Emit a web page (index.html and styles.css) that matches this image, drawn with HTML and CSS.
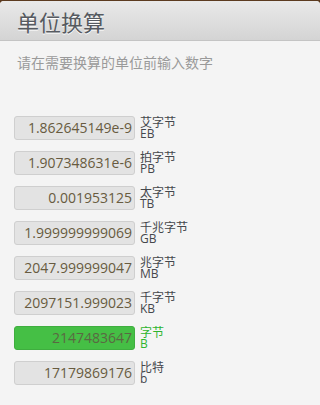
FILE: index.html
```html
<!DOCTYPE html>
<html>
<head>
<meta charset="utf-8">
<link rel="stylesheet" href="styles.css">
</head>
<body>
<div class="page">
  <header class="header"><h1 class="title">单位换算</h1></header>
  <p class="hint">请在需要换算的单位前输入数字</p>
  <div class="rows">
    <div class="row"><div class="field">1.862645149e-9</div><div class="unit"><span>艾字节</span><span>EB</span></div></div>
    <div class="row"><div class="field">1.907348631e-6</div><div class="unit"><span>拍字节</span><span>PB</span></div></div>
    <div class="row"><div class="field">0.001953125</div><div class="unit"><span>太字节</span><span>TB</span></div></div>
    <div class="row"><div class="field">1.999999999069</div><div class="unit"><span>千兆字节</span><span>GB</span></div></div>
    <div class="row"><div class="field">2047.999999047</div><div class="unit"><span>兆字节</span><span>MB</span></div></div>
    <div class="row"><div class="field">2097151.999023</div><div class="unit"><span>千字节</span><span>KB</span></div></div>
    <div class="row active"><div class="field">2147483647</div><div class="unit"><span>字节</span><span>B</span></div></div>
    <div class="row"><div class="field">17179869176</div><div class="unit"><span>比特</span><span>b</span></div></div>
  </div>
</div>
</body>
</html>
```

FILE: styles.css
```css
html, body {
  margin: 0;
  padding: 0;
}
body {
  background: #5c3b20;
  font-family: "Open Sans", "Noto Sans CJK SC", sans-serif;
}
.page {
  margin-top: 1px;
  height: 404px;
  background: #f4f4f4;
  border-radius: 4px 4px 0 0;
  overflow: hidden;
}
.header {
  height: 39px;
  border-bottom: 1px solid #c4c4c4;
  background: linear-gradient(#e9e9e9, #d4d4d4);
  display: flex;
  align-items: center;
  padding-left: 17px;
}
.title {
  margin: 0;
  font-family: "Noto Sans CJK SC", sans-serif;
  font-weight: normal;
  font-size: 22px;
  line-height: 24px;
  color: #565a60;
  text-shadow: 0 1px 0 #fff;
}
.hint {
  margin: 12px 0 0 17px;
  font-family: "Noto Sans CJK SC", sans-serif;
  font-size: 14px;
  line-height: 18px;
  color: #9a9a9a;
}
.rows {
  margin-top: 45px;
  padding-left: 14px;
  display: flex;
  flex-direction: column;
  gap: 11px;
}
.row {
  display: flex;
  align-items: flex-start;
  gap: 5px;
  height: 24px;
}
.field {
  box-sizing: border-box;
  width: 121px;
  height: 24px;
  border: 1px solid #cfcfcf;
  border-radius: 3px;
  background: #e3e3e3;
  color: #685b40;
  font-family: "Open Sans", sans-serif;
  font-size: 14px;
  line-height: 22px;
  text-align: right;
  padding-right: 2px;
  white-space: nowrap;
}
.unit {
  display: flex;
  flex-direction: column;
  padding-top: 1px;
  font-family: "Open Sans", "Noto Sans CJK SC", sans-serif;
  font-size: 12px;
  line-height: 11px;
  color: #45474c;
  white-space: nowrap;
}
.unit span {
  display: block;
  height: 11px;
}
.active .field {
  background: #45bf45;
  border-color: #3fae3f;
  color: #5a6842;
}
.active .unit {
  color: #2fb52f;
}
```
